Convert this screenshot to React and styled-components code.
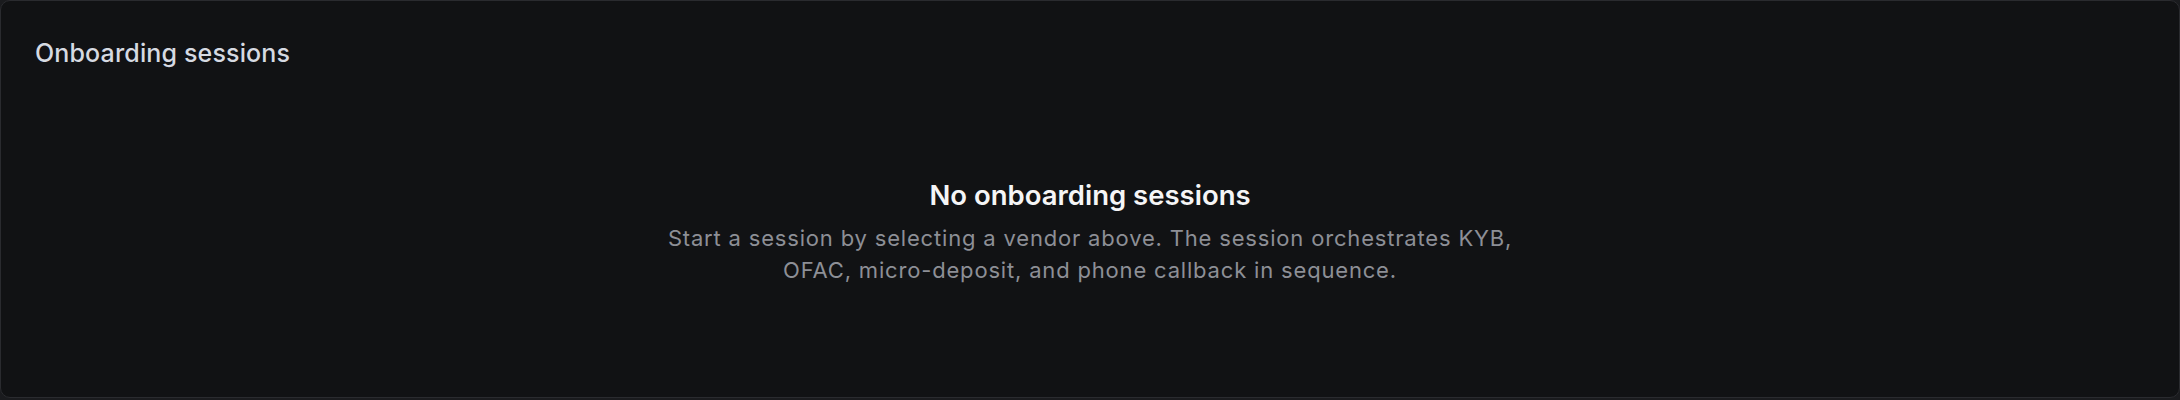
import React from "react";
import styled, { createGlobalStyle } from "styled-components";

const Global = createGlobalStyle`
  * { box-sizing: border-box; }
  html, body { margin: 0; padding: 0; background: #1a1b1e; }
  body { font-family: Inter, "Noto Sans", sans-serif; -webkit-font-smoothing: antialiased; }
`;

const Card = styled.section`
  width: 2180px;
  height: 398px;
  background: #111214;
  border: 1px solid #2a2b2f;
  border-radius: 10px;
  padding: 35px 34px 0;
  display: flex;
  flex-direction: column;
`;

const Title = styled.h2`
  margin: 0;
  font-size: 25px;
  line-height: 35px;
  font-weight: 500;
  color: #d6dae2;
  letter-spacing: 0.15px;
`;

const Empty = styled.div`
  flex: 1;
  display: flex;
  flex-direction: column;
  align-items: center;
  padding-top: 106px;
  text-align: center;
`;

const EmptyHeading = styled.h3`
  margin: 0 0 9px;
  font-size: 27.5px;
  line-height: 36px;
  font-weight: 600;
  color: #f5f5f6;
`;

const EmptyText = styled.p`
  margin: 0;
  max-width: 880px;
  font-size: 22px;
  line-height: 32px;
  font-weight: 400;
  color: #8d8f96;
  letter-spacing: 0.82px;
`;

export default function App() {
  return (
    <>
      <Global />
      <Card>
        <Title>Onboarding sessions</Title>
        <Empty>
          <EmptyHeading>No onboarding sessions</EmptyHeading>
          <EmptyText>
            Start a session by selecting a vendor above. The session orchestrates KYB,
            OFAC, micro-deposit, and phone callback in sequence.
          </EmptyText>
        </Empty>
      </Card>
    </>
  );
}
